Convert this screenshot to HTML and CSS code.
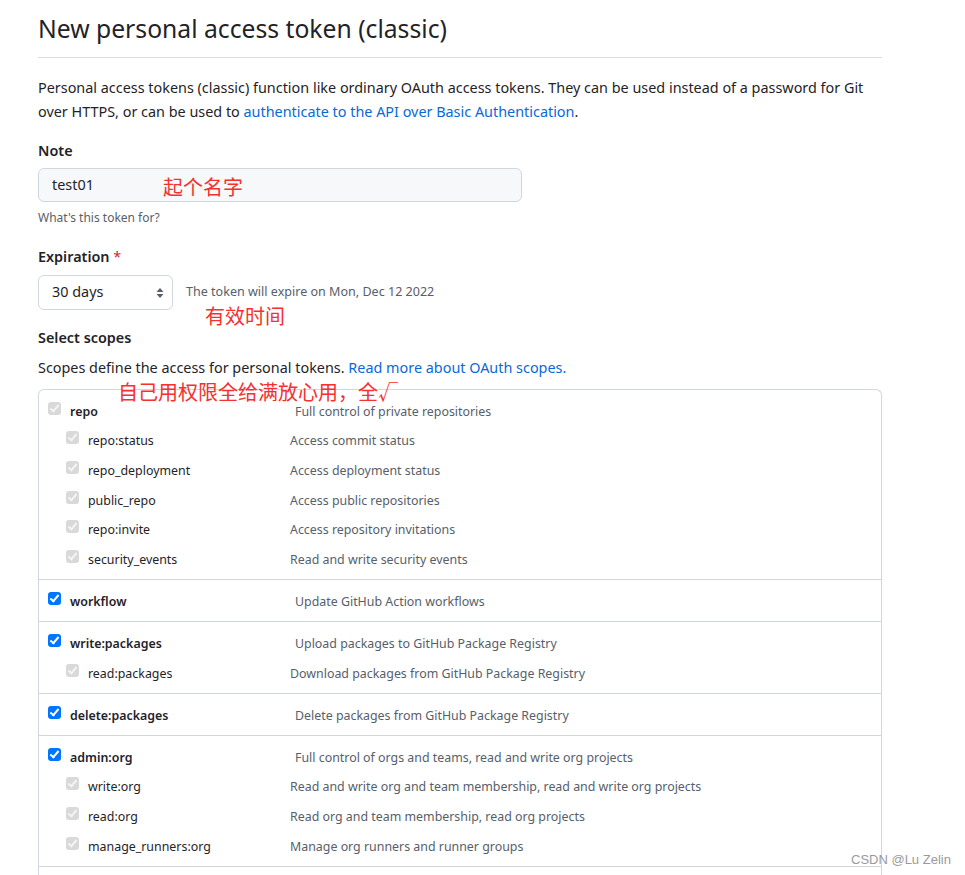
FILE: index.html
```html
<!DOCTYPE html>
<html lang="en">
<head>
<meta charset="utf-8">
<title>New personal access token (classic)</title>
<link rel="stylesheet" href="styles.css">
</head>
<body>
<div class="page">
  <h1 class="title">New personal access token (classic)</h1>
  <p class="intro">Personal access tokens (classic) function like ordinary OAuth access tokens. They can be used instead of a password for Git over HTTPS, or can be used to <a href="#">authenticate to the API over Basic Authentication</a>.</p>

  <div class="field">
    <div class="label">Note</div>
    <div class="input-row">
      <div class="input">test01<span class="note-cn note-name">起个名字</span></div>
    </div>
    <div class="hint">What's this token for?</div>
  </div>

  <div class="field field-exp">
    <div class="label">Expiration <span class="req">*</span></div>
    <div class="exp-row">
      <div class="select">30 days
        <svg class="sel-arrows" width="8" height="12" viewBox="0 0 8 12"><path d="M4 1 L7.5 5 H0.5 Z" fill="#57606a"/><path d="M4 11 L7.5 7 H0.5 Z" fill="#57606a"/></svg>
      </div>
      <div class="exp-info">
        <div class="exp-text">The token will expire on Mon, Dec 12 2022</div>
        <div class="note-cn note-time">有效时间</div>
      </div>
    </div>
  </div>

  <div class="label scopes-label">Select scopes</div>
  <p class="scopes-desc">Scopes define the access for personal tokens. <a href="#">Read more about OAuth scopes.</a></p>
  <div class="note-cn note-all">自己用权限全给满放心用，全√</div>

  <div class="scopes">
    <div class="group">
      <div class="row parent"><span class="cb dis"></span><span class="name">repo</span><span class="desc">Full control of private repositories</span></div>
      <div class="row child"><span class="cb dis"></span><span class="name">repo:status</span><span class="desc">Access commit status</span></div>
      <div class="row child"><span class="cb dis"></span><span class="name">repo_deployment</span><span class="desc">Access deployment status</span></div>
      <div class="row child"><span class="cb dis"></span><span class="name">public_repo</span><span class="desc">Access public repositories</span></div>
      <div class="row child"><span class="cb dis"></span><span class="name">repo:invite</span><span class="desc">Access repository invitations</span></div>
      <div class="row child"><span class="cb dis"></span><span class="name">security_events</span><span class="desc">Read and write security events</span></div>
    </div>
    <div class="group">
      <div class="row parent"><span class="cb on"></span><span class="name">workflow</span><span class="desc">Update GitHub Action workflows</span></div>
    </div>
    <div class="group">
      <div class="row parent"><span class="cb on"></span><span class="name">write:packages</span><span class="desc">Upload packages to GitHub Package Registry</span></div>
      <div class="row child"><span class="cb dis"></span><span class="name">read:packages</span><span class="desc">Download packages from GitHub Package Registry</span></div>
    </div>
    <div class="group">
      <div class="row parent"><span class="cb on"></span><span class="name">delete:packages</span><span class="desc">Delete packages from GitHub Package Registry</span></div>
    </div>
    <div class="group">
      <div class="row parent"><span class="cb on"></span><span class="name">admin:org</span><span class="desc">Full control of orgs and teams, read and write org projects</span></div>
      <div class="row child"><span class="cb dis"></span><span class="name">write:org</span><span class="desc">Read and write org and team membership, read and write org projects</span></div>
      <div class="row child"><span class="cb dis"></span><span class="name">read:org</span><span class="desc">Read org and team membership, read org projects</span></div>
      <div class="row child"><span class="cb dis"></span><span class="name">manage_runners:org</span><span class="desc">Manage org runners and runner groups</span></div>
    </div>
    <div class="group group-next"></div>
  </div>
</div>
<div class="watermark">CSDN @Lu Zelin</div>
</body>
</html>
```
FILE: styles.css
```css
html, body {
  margin: 0;
  padding: 0;
  background: #ffffff;
  height: 875px;
  overflow: hidden;
}
body {
  font-family: "Noto Sans", "Open Sans", sans-serif;
  color: #1f2328;
  font-size: 14.4px;
  position: relative;
}
.page {
  width: 844px;
  margin-left: 38px;
  padding-top: 11px;
}
.title {
  font-size: 24.7px;
  font-weight: 400;
  line-height: 36px;
  margin: 0;
  padding-bottom: 10px;
  border-bottom: 1px solid #d8dee4;
}
.intro {
  margin: 18px 0 0;
  line-height: 24px;
  font-size: 14.4px;
}
a {
  color: #0969da;
  text-decoration: none;
}
.field {
  margin-top: 15px;
}
.label {
  font-weight: 600;
  font-size: 14.4px;
  line-height: 24px;
}
.req { color: #cf222e; font-weight: 400; }
.input-row { margin-top: 5px; }
.input {
  width: 469px;
  height: 32px;
  border: 1px solid #d0d7de;
  border-radius: 6px;
  background: #f6f8fa;
  padding-left: 13px;
  line-height: 32px;
  font-size: 14.4px;
  position: relative;
}
.note-cn {
  color: #f5302f;
  font-family: "Noto Sans CJK SC", "Noto Sans", sans-serif;
  font-size: 20px;
  line-height: 24px;
}
.note-name {
  position: absolute;
  left: 124px;
  top: 6px;
}
.hint {
  font-size: 12px;
  color: #57606a;
  line-height: 18px;
  margin-top: 7px;
}
.field-exp { margin-top: 18px; }
.exp-row {
  display: flex;
  align-items: flex-start;
  margin-top: 6px;
}
.select {
  width: 120px;
  height: 33px;
  border: 1px solid #d0d7de;
  border-radius: 6px;
  padding-left: 13px;
  line-height: 31px;
  font-size: 14.4px;
  position: relative;
}
.sel-arrows {
  position: absolute;
  right: 8px;
  top: 11px;
}
.exp-info {
  margin-left: 13px;
}
.exp-text {
  font-size: 12.55px;
  color: #57606a;
  line-height: 20px;
  margin-top: 7px;
}
.note-cn.note-time {
  margin-left: 19px;
  margin-top: 2px;
}
.scopes-label { margin-top: -2px; }
.scopes-desc {
  margin: 6px 0 0;
  line-height: 24px;
  font-size: 14.4px;
}
.note-cn.note-all {
  margin-left: 80px;
  margin-top: 1px;
  height: 22px;
  line-height: 22px;
  position: relative;
  z-index: 1;
}
.scopes {
  border: 1px solid #d0d7de;
  border-bottom: none;
  border-radius: 6px 6px 0 0;
  margin-top: -14px;
}
.group {
  padding: 6px 0 5px;
  border-top: 1px solid #d0d7de;
}
.group:first-child { border-top: none; }
.group-next { height: 40px; }
.row {
  display: flex;
  align-items: center;
  height: 29.7px;
}
.parent { padding-left: 9px; height: 30px; }
.child { padding-left: 27px; }
.cb {
  width: 13px;
  height: 13px;
  border-radius: 3px;
  flex: none;
  position: relative;
  top: -3px;
}
.cb::after {
  content: "";
  position: absolute;
  left: 4px;
  top: 1px;
  width: 3px;
  height: 7px;
  border: solid #fff;
  border-width: 0 2px 2px 0;
  transform: rotate(40deg);
}
.cb.dis { background: #d9d9d9; }
.cb.dis::after { border-color: #f4f4f4; }
.cb.on { background: #0075ff; }
.name {
  margin-left: 9px;
  font-size: 12.4px;
}
.parent .name { font-weight: 600; width: 225px; }
.child .name { width: 202px; }
.desc {
  font-size: 12.4px;
  color: #57606a;
}
.watermark {
  position: absolute;
  left: 851px;
  top: 851px;
  font-family: "Liberation Sans", Arial, sans-serif;
  font-size: 13px;
  color: #9a9a9a;
  line-height: 18px;
}
```
